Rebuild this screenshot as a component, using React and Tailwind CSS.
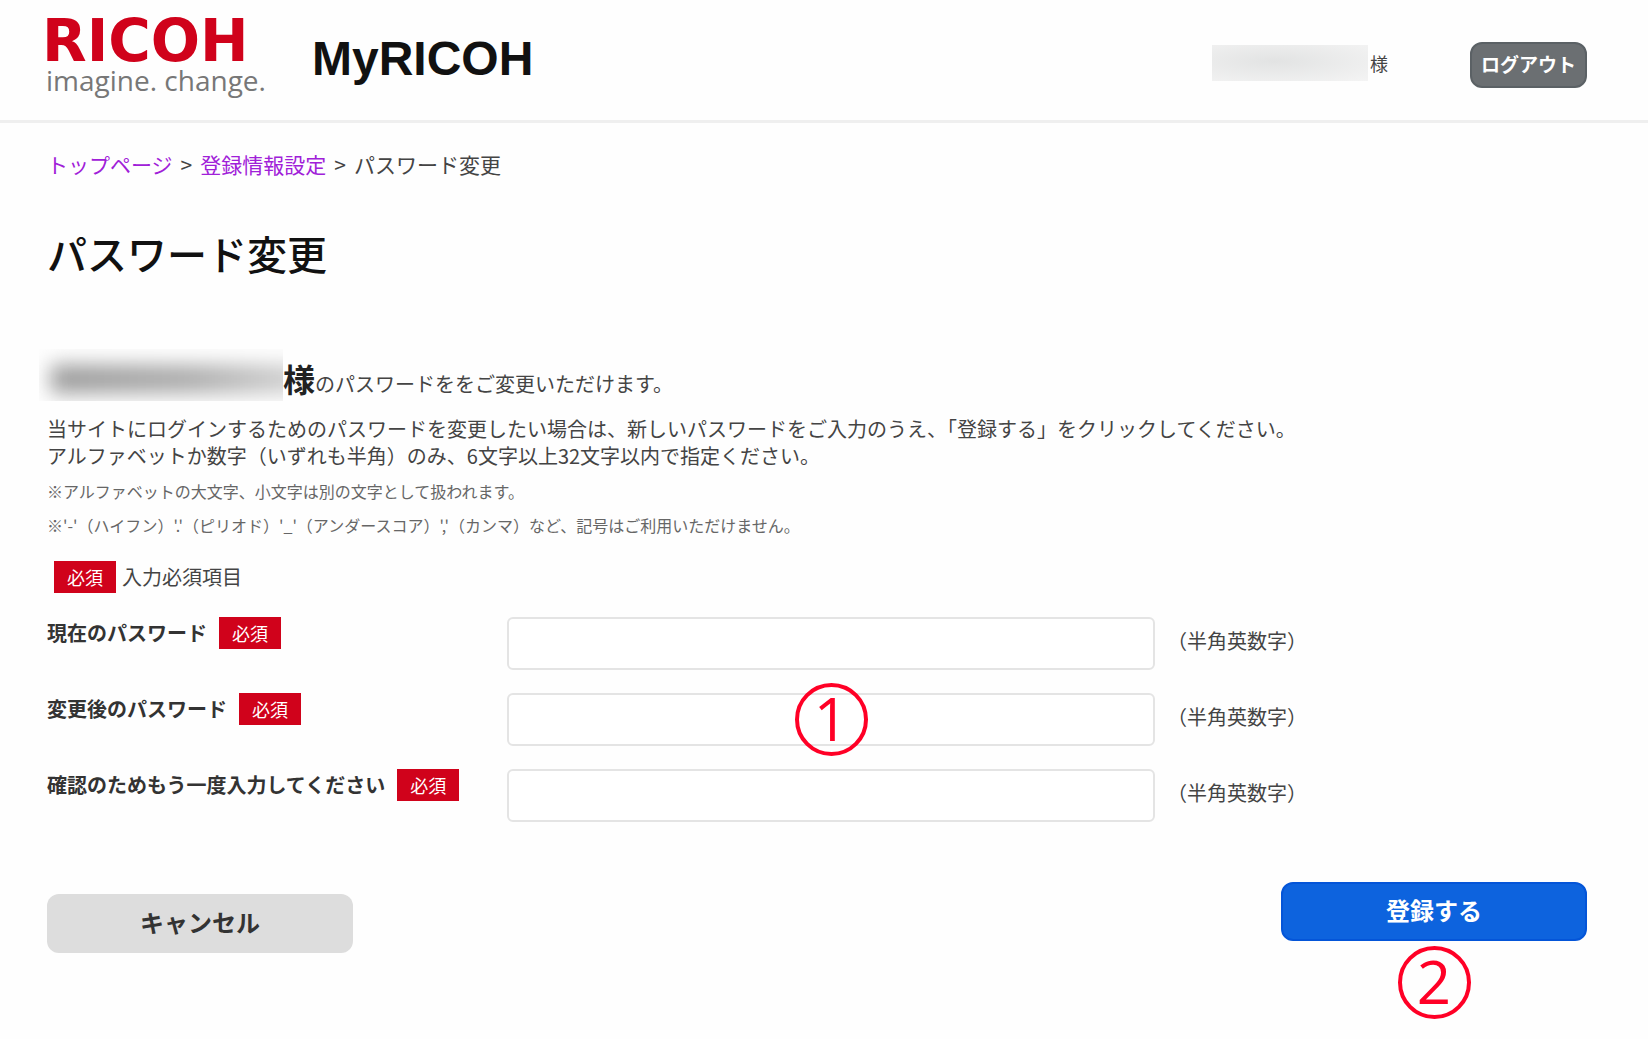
import { useState } from "react";

const fields = [
  { id: "current", label: "現在のパスワード" },
  { id: "next", label: "変更後のパスワード", marker: "1" },
  { id: "confirm", label: "確認のためもう一度入力してください" },
];

function RequiredBadge() {
  return (
    <span className="inline-flex h-8 w-[62px] shrink-0 items-center justify-center bg-[#d0021b] pb-px text-lg leading-none font-normal text-white">
      必須
    </span>
  );
}

function StepMarker({ children }) {
  return (
    <span className="pointer-events-none flex size-[73px] items-center justify-center rounded-full border-4 border-[#ff0026] pb-1 font-['Open_Sans',sans-serif] text-[60px] leading-none font-medium text-[#ff0026]">
      {children}
    </span>
  );
}

function Header() {
  return (
    <header className="flex h-[123px] items-start border-b-3 border-[#efefef] pr-[61px] pl-[46px]">
      <a href="#" className="mt-3 w-[266px]">
        <span className="-ml-1 block font-['DejaVu_Sans',sans-serif] text-[58px] leading-[58px] font-bold text-[#d0021b]">
          RICOH
        </span>
        <span className="block font-['Open_Sans',sans-serif] text-[28px] leading-5 text-[#777]">
          imagine. change.
        </span>
      </a>
      <p className="mt-8 font-['Liberation_Sans',sans-serif] text-[48px] leading-[54px] font-bold text-[#111]">
        MyRICOH
      </p>
      <div className="mt-[42px] ml-auto flex h-[46px] items-center pb-1">
        {/* masked user name */}
        <span className="block h-9 w-[156px] bg-radial-[at_40%_45%] from-[#e2e3e3] to-[#f4f4f4]" />
        <span className="ml-[2px] text-lg leading-none text-[#444]">様</span>
        <button
          type="button"
          className="mt-1 ml-[82px] h-[46px] w-[117px] rounded-xl border-2 border-[#5b6165] bg-[#6b6f72] pb-1 text-[19px] leading-none font-bold text-white"
        >
          ログアウト
        </button>
      </div>
    </header>
  );
}

export default function App() {
  const [values, setValues] = useState({ current: "", next: "", confirm: "" });

  const handleChange = (e) => {
    setValues({ ...values, [e.target.id]: e.target.value });
  };

  return (
    <div className="min-h-screen bg-[#fefefe] font-['Noto_Sans_CJK_JP',sans-serif] text-[#444]">
      <Header />

      <main className="pr-[61px] pb-8 pl-[47px]">
        <nav className="flex gap-2 pt-[25px] text-[21px] leading-8">
          <a href="#" className="text-[#a020d8]">トップページ</a>
          <span>&gt;</span>
          <a href="#" className="text-[#a020d8]">登録情報設定</a>
          <span>&gt;</span>
          <span>パスワード変更</span>
        </nav>

        <h1 className="mt-[45px] text-[40px] leading-[56px] font-medium text-[#111]">パスワード変更</h1>

        <div className="mt-[68px] flex h-[52px] items-baseline text-xl">
          {/* masked user name */}
          <span className="-ml-2 h-[52px] w-[244px] shrink-0 self-start overflow-hidden">
            <span className="mt-4 ml-3 block h-7 w-[280px] bg-linear-to-r from-[#999] via-[#aaa] to-[#ddd] blur-[10px]" />
          </span>
          <strong className="text-[32px] leading-[58px] font-bold text-[#222]">様</strong>
          <span>のパスワードををご変更いただけます。</span>
        </div>

        <p className="mt-[14px] text-xl leading-[27px]">
          当サイトにログインするためのパスワードを変更したい場合は、新しいパスワードをご入力のうえ、「登録する」をクリックしてください。
          <br />
          アルファベットか数字（いずれも半角）のみ、6文字以上32文字以内で指定ください。
        </p>
        <p className="mt-[5px] text-base leading-[34px] text-[#666]">
          ※アルファベットの大文字、小文字は別の文字として扱われます。
          <br />
          ※'-'（ハイフン）'.'（ピリオド）'_'（アンダースコア）','（カンマ）など、記号はご利用いただけません。
        </p>

        <p className="mt-[19px] ml-[7px] flex items-center gap-[6px] text-xl leading-8">
          <RequiredBadge />
          入力必須項目
        </p>

        <form onSubmit={(e) => e.preventDefault()}>
          <div className="mt-6 flex flex-col gap-[23px]">
            {fields.map((field) => (
              <div key={field.id} className="flex items-start">
                <label
                  htmlFor={field.id}
                  className="flex w-[460px] shrink-0 items-center gap-3 text-xl leading-8 font-bold text-[#333]"
                >
                  {field.label}
                  <RequiredBadge />
                </label>
                <div className="relative max-w-[648px] flex-1">
                  <input
                    id={field.id}
                    type="password"
                    value={values[field.id]}
                    onChange={handleChange}
                    className="block h-[53px] w-full rounded-md border-2 border-[#e4e4e4] bg-white px-4 text-xl"
                  />
                  {field.marker && (
                    <div className="pointer-events-none absolute inset-0 flex items-center justify-center">
                      <StepMarker>{field.marker}</StepMarker>
                    </div>
                  )}
                </div>
                <span className="ml-3 text-xl leading-[48px]">（半角英数字）</span>
              </div>
            ))}
          </div>

          <div className="mt-[60px] flex items-start justify-between">
            <button
              type="button"
              className="mt-3 h-[59px] w-[306px] rounded-xl bg-[#ddd] pb-1 text-2xl leading-none font-bold text-[#333]"
            >
              キャンセル
            </button>
            <div className="flex flex-col items-center gap-[5px]">
              <button
                type="submit"
                className="h-[59px] w-[306px] rounded-xl border-2 border-[#0455d8] bg-[#0d63de] pb-1 text-2xl leading-none font-bold text-white"
              >
                登録する
              </button>
              <StepMarker>2</StepMarker>
            </div>
          </div>
        </form>
      </main>
    </div>
  );
}
